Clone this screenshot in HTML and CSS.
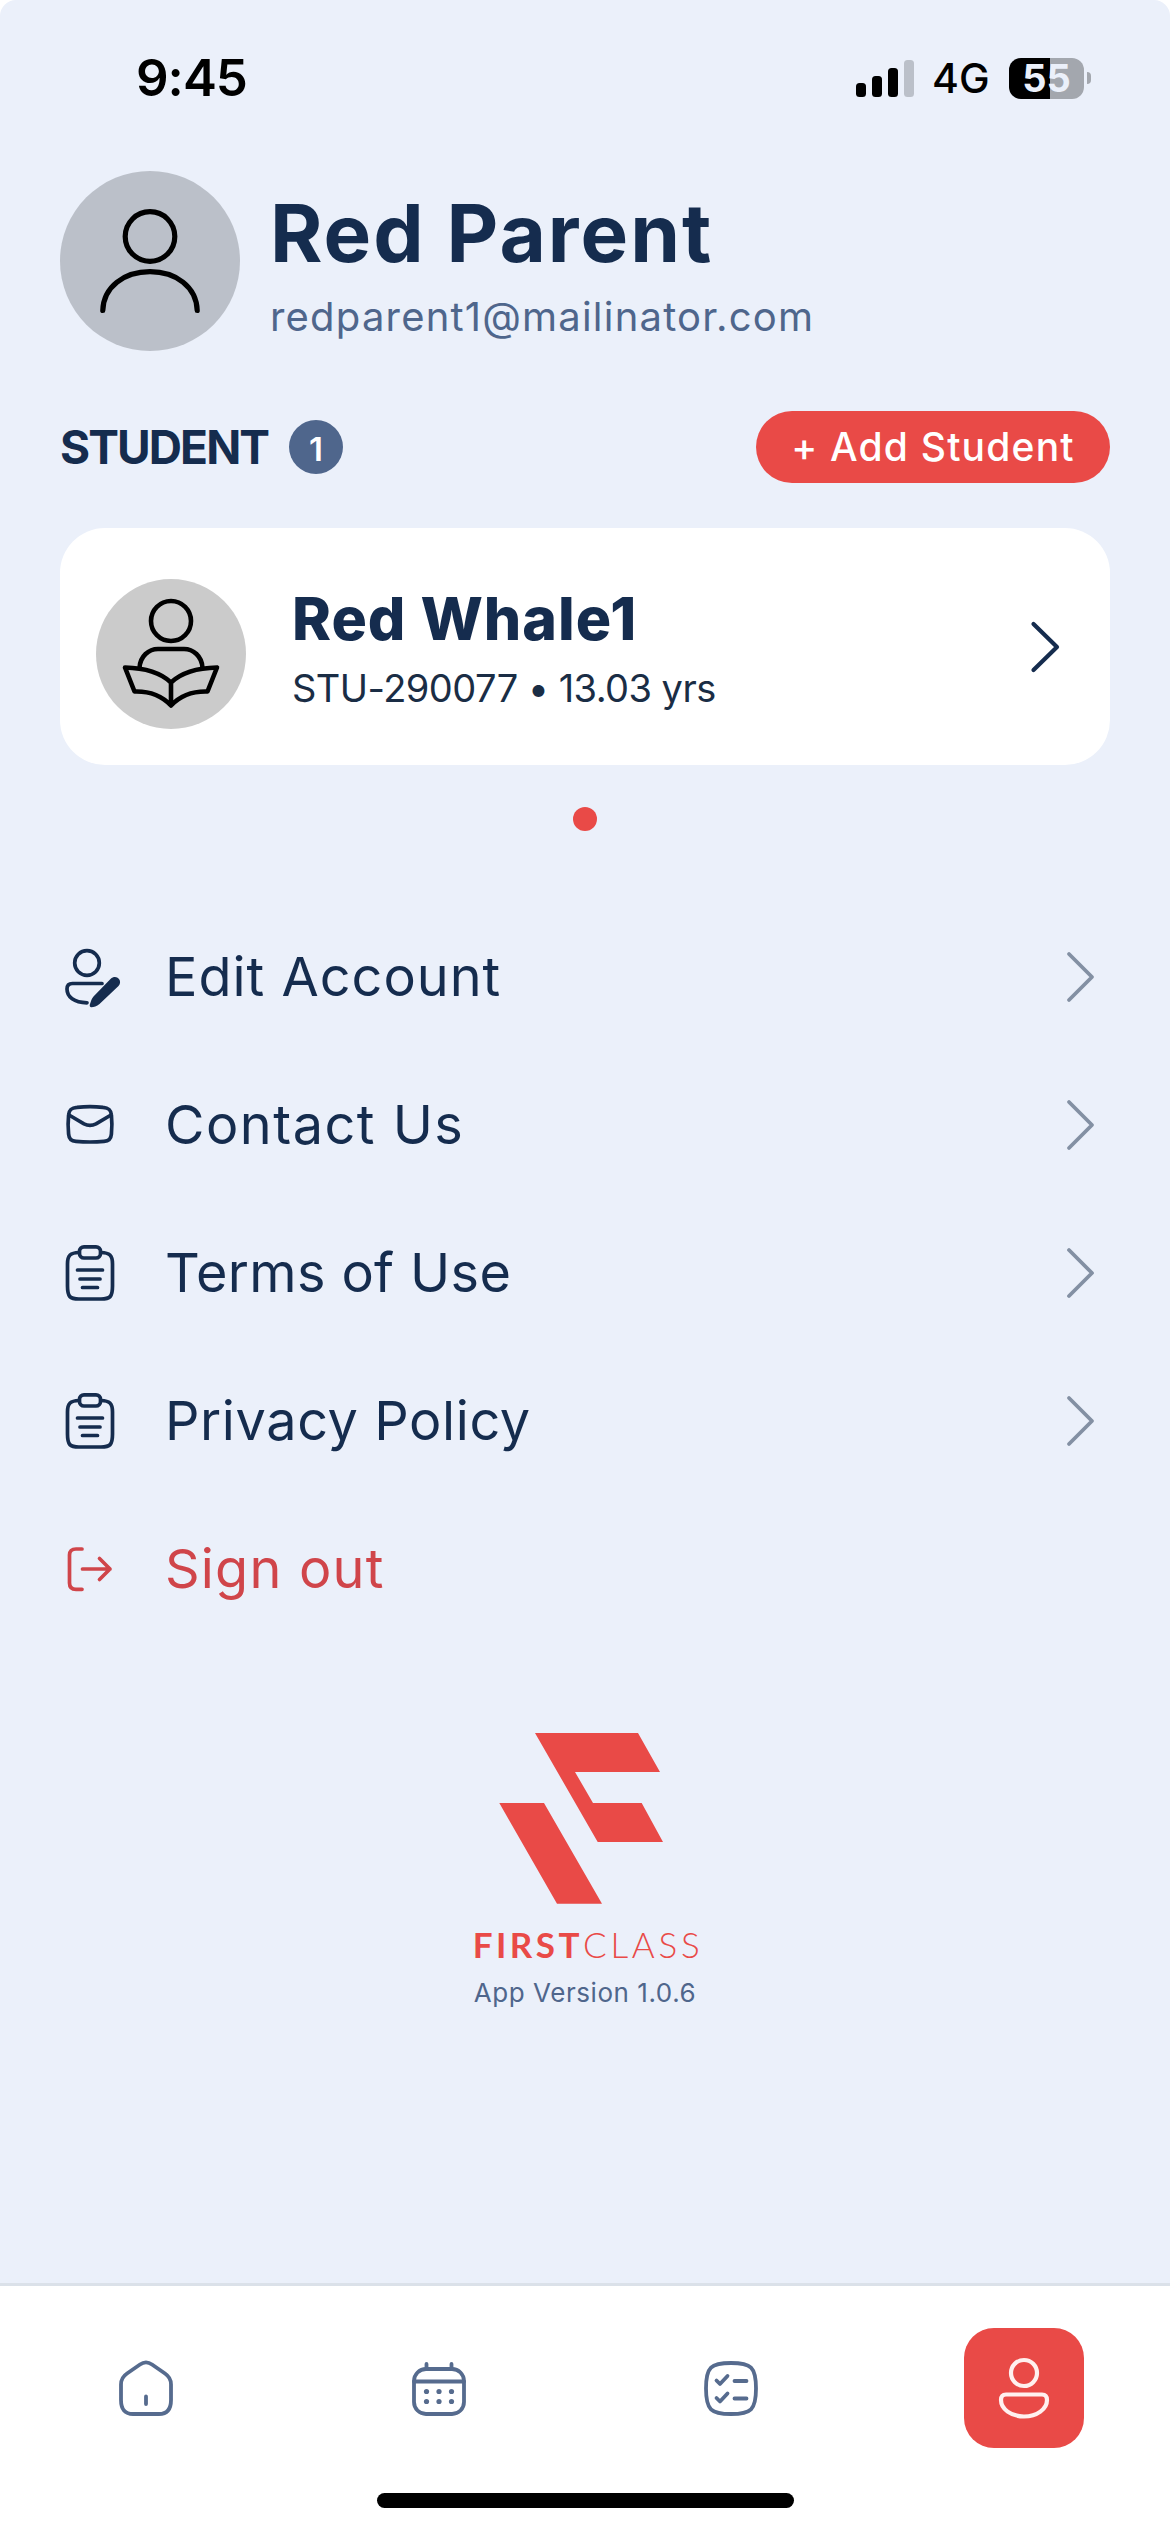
FILE: index.html
```html
<!DOCTYPE html>
<html lang="en">
<head>
<meta charset="utf-8">
<title>Account</title>
<link rel="stylesheet" href="styles.css">
</head>
<body>
<div class="screen">
  <header class="status">
    <span class="time">9:45</span>
    <div class="status-right">
      <svg class="signal" viewBox="0 0 58 37"><rect y="23" width="10" height="14" rx="3.5"/><rect x="16" y="16" width="10" height="21" rx="3.5"/><rect x="32" y="8" width="10" height="29" rx="3.5"/><rect class="off" x="48" width="10" height="37" rx="3.5"/></svg>
      <span class="network">4G</span>
      <div class="battery"><span class="level">55</span></div>
      <span class="battery-cap"></span>
    </div>
  </header>

  <section class="profile">
    <svg class="avatar" viewBox="0 0 180 180"><circle class="disc" cx="90" cy="90" r="90"/><g class="line"><circle cx="90" cy="65.500" r="24.800"/><path d="M42.800 139.500C43.500 116 64 100.700 90 100.700s46.500 15.300 47.200 38.800"/></g></svg>
    <div class="who">
      <h1 class="name"><span>Red Parent</span></h1>
      <p class="email"><span>redparent1@mailinator.com</span></p>
    </div>
  </section>

  <section class="students">
    <div class="students-head">
      <h2 class="label"><span>STUDENT</span></h2>
      <span class="count">1</span>
      <button class="add"><span>+ Add Student</span></button>
    </div>
    <a class="card">
      <svg class="reader" viewBox="0 0 150 150"><circle class="disc" cx="75" cy="75" r="75"/><g class="line"><circle cx="75" cy="42" r="20"/><path d="M43.500 89C44 77 53 70 62 70H88C97 70 106 77 106.500 89"/><path d="M75 103.500C65 94 50 89 29 88.500L38.500 112.500C54 112 67 118 75 126.500C83 118 96 112 111.500 112.500L121 88.500C100 89 85 94 75 103.500ZM75 103.500V126"/></g></svg>
      <div class="student">
        <h3 class="student-name"><span>Red Whale1</span></h3>
        <p class="student-meta"><span>STU-290077 • 13.03 yrs</span></p>
      </div>
      <svg class="go" viewBox="0 0 30 54"><path d="M3.500 4L27 27L3.500 50"/></svg>
    </a>
    <span class="pager"></span>
  </section>

  <nav class="menu">
    <a class="item">
      <svg class="icon" viewBox="0 0 60 60"><circle cx="27" cy="16" r="12.300"/><path d="M42 36.500H12.500C9 36.500 7 38.500 7 42C7 50 14 55.500 27 55.800"/><path class="fill" d="M50.500 32C53.500 29.200 57 29.500 59 32C60.800 34.500 60.200 37 58.500 39L39.500 57C36.500 59.500 33.500 60.300 31 60.200C29.500 59.800 29.500 58.500 30 57C31 54 31.500 52 33.500 49.500Z"/></svg>
      <span class="text t-edit">Edit Account</span>
      <svg class="chev" viewBox="0 0 30 54"><path d="M3 4L26 27L3 50"/></svg>
    </a>
    <a class="item">
      <svg class="icon" viewBox="0 0 60 60"><path d="M17 12.300Q30 10.900 43 12.300C49 12.800 51 15 51.400 20Q52.400 29.500 51.400 39C51 44 49 46 44 46.400Q30 47.600 16 46.400C11 46 9 44 8.600 39Q7.600 29.500 8.600 20C9 15 11 12.800 17 12.300Z"/><path d="M9 20L24 28.800Q30 31.800 36 28.800L51 20"/></svg>
      <span class="text t-contact">Contact Us</span>
      <svg class="chev" viewBox="0 0 30 54"><path d="M3 4L26 27L3 50"/></svg>
    </a>
    <a class="item">
      <svg class="icon" viewBox="0 0 60 60"><path d="M19 9.500C10.500 9.800 7.500 12 7.500 21V43C7.500 54 10 56 19 56H41C50 56 52.500 54 52.500 43V21C52.500 12 49.500 9.800 41 9.500"/><rect x="19.500" y="3.800" width="21" height="11.200" rx="4.500"/><path d="M17.500 27H42.500M20 36H40M22.500 44.500H37.500"/></svg>
      <span class="text t-terms">Terms of Use</span>
      <svg class="chev" viewBox="0 0 30 54"><path d="M3 4L26 27L3 50"/></svg>
    </a>
    <a class="item">
      <svg class="icon" viewBox="0 0 60 60"><path d="M19 9.500C10.500 9.800 7.500 12 7.500 21V43C7.500 54 10 56 19 56H41C50 56 52.500 54 52.500 43V21C52.500 12 49.500 9.800 41 9.500"/><rect x="19.500" y="3.800" width="21" height="11.200" rx="4.500"/><path d="M17.500 27H42.500M20 36H40M22.500 44.500H37.500"/></svg>
      <span class="text t-privacy">Privacy Policy</span>
      <svg class="chev" viewBox="0 0 30 54"><path d="M3 4L26 27L3 50"/></svg>
    </a>
    <a class="item out">
      <svg class="icon" viewBox="0 0 60 60"><path d="M22 10H16Q9.500 10 9.500 16V44Q9.500 50.300 16 50.300H22M22.500 30H50M39.500 19.500L50 30L39.500 40.500"/></svg>
      <span class="text t-out">Sign out</span>
    </a>
  </nav>

  <footer class="brand">
    <svg class="logo" viewBox="499 1733 165 171"><path d="M535 1733H638L660 1772H575L593 1803H641.700L663 1842H597.700ZM499.300 1803H544L602 1903.700H557Z"/></svg>
    <div class="wordmark"><b class="first">FIRST</b><span class="class">CLASS</span></div>
    <p class="version"><span>App Version 1.0.6</span></p>
  </footer>

  <nav class="tabs">
    <a class="tab"><svg class="tab-icon" viewBox="0 0 60 60"><path d="M24 6.500Q30 2.200 36 6.500L49 15.500Q55 19.500 55 26.500V42Q55 56 43 56H17Q5 56 5 42V26.500Q5 19.500 11 15.500ZM30 38.500V46"/></svg></a>
    <a class="tab"><svg class="tab-icon" viewBox="0 0 60 60"><rect x="5" y="11" width="50" height="45" rx="12"/><path d="M17.500 6V10M42.500 6V10M5 23.500H55"/><g class="dots"><circle cx="17.500" cy="33.500" r="2.600"/><circle cx="30" cy="33.500" r="2.600"/><circle cx="42.500" cy="33.500" r="2.600"/><circle cx="17.500" cy="43.500" r="2.600"/><circle cx="30" cy="43.500" r="2.600"/><circle cx="42.500" cy="43.500" r="2.600"/></g></svg></a>
    <a class="tab"><svg class="tab-icon" viewBox="0 0 60 60"><path d="M30 5C50 5 55 9 55 30.500S50 56 30 56S5 52 5 30.500S10 5 30 5Z"/><path d="M15.500 22.500L19 26L26.500 18M15.500 40L19 43.500L26.500 35.500M33.500 23H45.500M33.500 40.500H45.500"/></svg></a>
    <a class="tab active"><svg class="tab-icon" viewBox="0 0 60 60"><circle cx="30" cy="15" r="13"/><path d="M12 36.500H48Q53 36.500 53 42C53 51 43 58.500 30 58.500S7 51 7 42Q7 36.500 12 36.500Z"/></svg></a>
    <span class="home-bar"></span>
  </nav>
</div>
</body>
</html>
```

FILE: styles.css
```css
* { box-sizing: border-box; margin: 0; padding: 0; }
body { background: #fff; font-family: Inter, "Liberation Sans", sans-serif; color: #152c4e; }
svg { display: block; flex: none; fill: none; stroke-linecap: round; stroke-linejoin: round; overflow: visible; }
h1, h2, h3, p, span { white-space: nowrap; }

.screen { width: 1170px; height: 2532px; display: flex; flex-direction: column; background: #ebf0fa; border-radius: 16px 16px 0 0; overflow: hidden; }

.status { height: 171px; padding: 48px 79px 0 136px; display: flex; justify-content: space-between; align-items: flex-start; color: #000; }
.time { font-size: 51px; font-weight: 600; line-height: 60px; letter-spacing: -1px; }
.status-right { display: flex; align-items: center; height: 60px; }
.signal { width: 58px; height: 37px; fill: #000; }
.signal .off { fill: #bbc0c9; }
.network { width: 95px; padding-left: 18px; font-size: 41px; font-weight: 500; line-height: 60px; }
.battery { width: 75px; height: 41px; border-radius: 12px; background: linear-gradient(90deg, #000 55%, #a3a7ae 55%); text-align: center; }
.level { font-size: 38px; font-weight: 700; line-height: 41px; color: #ebf0fa; }
.battery-cap { width: 4px; height: 12px; margin-left: 3px; border-radius: 0 4px 4px 0; background: #a3a7ae; }

.profile { display: flex; height: 180px; padding: 0 60px; }
.avatar { width: 180px; height: 180px; }
.avatar .disc { fill: #bbc0c9; }
.line { stroke: #000; stroke-width: 5.2; }
.who { padding: 17px 0 0 30px; }
.name { height: 91px; line-height: 90px; font-size: 80px; font-weight: 700; letter-spacing: 2px; }
.email { height: 76px; line-height: 76px; font-size: 40px; letter-spacing: 1.2px; color: #4f668c; }

.students { padding: 60px 60px 0; display: flex; flex-direction: column; }
.students-head { display: flex; align-items: center; height: 72px; }
.label { width: 211px; font-size: 46px; font-weight: 700; letter-spacing: -1.9px; }
.count { width: 54px; height: 54px; margin-left: 18px; border-radius: 50%; background: #4f668c; color: #fff; font-size: 33px; font-weight: 600; line-height: 58px; text-align: center; }
.add { width: 354px; height: 72px; margin-left: auto; border: 0; border-radius: 36px; background: #e94a47; color: #fff; font: 500 39px/72px Inter, "Liberation Sans", sans-serif; letter-spacing: 1.2px; }
.card { display: flex; height: 237px; margin-top: 45px; padding: 51px 50px 0 36px; border-radius: 45px; background: #fff; }
.reader { width: 150px; height: 150px; }
.reader .disc { fill: #cbcbcb; }
.reader .line { stroke-width: 4.6; }
.student { flex: 1; padding: 5px 0 0 46px; }
.student-name { height: 69px; line-height: 69px; font-size: 59px; font-weight: 800; letter-spacing: 1px; }
.student-meta { height: 70px; line-height: 70px; font-size: 38px; letter-spacing: -0.55px; color: #1a2d45; }
.go { width: 30px; height: 54px; margin-top: 41px; stroke: #152c4e; stroke-width: 4.2; }
.pager { width: 24px; height: 24px; margin: 42px auto 0; border-radius: 50%; background: #e94a47; }

.menu { padding: 72px 60px 0; }
.item { display: flex; align-items: center; height: 148px; }
.icon { width: 60px; height: 60px; stroke: #152c4e; stroke-width: 3.7; }
.icon .fill { fill: #152c4e; stroke: none; }
.text { flex: 1; padding-left: 45px; font-size: 54px; line-height: 70px; }
.t-edit { letter-spacing: 1px; }
.t-contact { letter-spacing: 1.5px; }
.t-terms { letter-spacing: 0.35px; }
.t-privacy { letter-spacing: 0.6px; }
.t-out { letter-spacing: 1.2px; }
.chev { width: 30px; height: 54px; margin-right: 14px; stroke: #8390a3; stroke-width: 3.8; }
.out { color: #d0454a; }
.out .icon { stroke: #d0454a; }

.brand { display: flex; flex-direction: column; align-items: center; padding-top: 90px; }
.logo { width: 165px; height: 171px; margin-left: -8px; fill: #e94a47; }
.wordmark { display: flex; height: 50px; margin: 16px 0 0 6px; font-family: Lato, sans-serif; font-size: 35px; line-height: 48px; color: #e94a47; }
.first { font-weight: 700; letter-spacing: 3.5px; }
.class { font-weight: 300; letter-spacing: 3.7px; }
.version { height: 44px; margin-top: 1px; font-size: 26px; line-height: 44px; letter-spacing: 0.55px; color: #4f668c; }

.tabs { position: relative; display: flex; justify-content: space-between; height: 249px; margin-top: auto; padding: 42px 86px 0; border-top: 3px solid #dbe1e9; background: #fff; }
.tab { display: flex; width: 120px; height: 120px; align-items: center; justify-content: center; border-radius: 30px; }
.tab-icon { width: 60px; height: 60px; stroke: #566b8e; stroke-width: 3.8; }
.tab-icon .dots { fill: #566b8e; stroke: none; }
.active { background: #e94a47; }
.active .tab-icon { stroke: #fff0ef; stroke-width: 4.2; }
.home-bar { position: absolute; left: 377px; bottom: 24px; width: 417px; height: 15px; border-radius: 8px; background: #000; }
```
